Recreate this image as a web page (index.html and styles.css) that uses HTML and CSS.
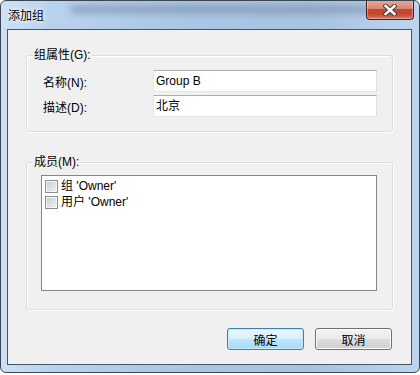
FILE: index.html
```html
<!DOCTYPE html>
<html lang="zh-CN">
<head>
<meta charset="UTF-8">
<title>添加组</title>
<link rel="stylesheet" href="styles.css">
</head>
<body>
    <div class="window">
        <div class="titlebar">
            <span class="title">添加组</span>
            <button class="close-button">
                <svg width="14" height="12" viewBox="0 0 14 12">
                    <path d="M2.5 2 L11.5 10 M11.5 2 L2.5 10" stroke="#3d3d3d" stroke-width="4.4" stroke-linecap="square"/>
                    <path d="M2.5 2 L11.5 10 M11.5 2 L2.5 10" stroke="#ffffff" stroke-width="2.4" stroke-linecap="square"/>
                </svg>
            </button>
        </div>

        <div class="client">
            <div class="group props">
                <span class="legend">组属性(G):</span>
                <div class="field-row">
                    <label class="field-label">名称(N):</label>
                    <div class="textbox">Group B</div>
                </div>
                <div class="field-row">
                    <label class="field-label">描述(D):</label>
                    <div class="textbox">北京</div>
                </div>
            </div>

            <div class="group members">
                <span class="legend">成员(M):</span>
                <div class="listbox">
                    <div class="list-item"><span class="check"></span>组 'Owner'</div>
                    <div class="list-item"><span class="check"></span>用户 'Owner'</div>
                </div>
            </div>

            <div class="button-row">
                <button class="dlg-button default-button">确定</button>
                <button class="dlg-button">取消</button>
            </div>
        </div>
    </div>
</body>
</html>
```

FILE: styles.css
```css
body {
    margin: 0;
    padding: 0;
    background-color: #ffffff;
    font-family: "Liberation Sans", "Noto Sans CJK SC", sans-serif;
    font-size: 12px;
    color: #000000;
}

.window {
    width: 420px;
    height: 373px;
    box-sizing: border-box;
    border: 1px solid #3a4654;
    border-radius: 6px;
    background: linear-gradient(to right, #cfe1f4 0%, #b9d2ec 12%, #aac6e4 45%, #a8c3e0 75%, #bdd5ee 100%);
    overflow: hidden;
}

.titlebar {
    height: 28px;
    display: flex;
    align-items: flex-start;
    position: relative;
}

.titlebar::before {
    content: "";
    position: absolute;
    left: 70px;
    right: 50px;
    top: 4px;
    height: 9px;
    background: rgba(104, 124, 150, 0.45);
    filter: blur(3px);
}

.title {
    position: relative;
    margin: 7px 0 0 7px;
    line-height: 16px;
    font-size: 12px;
    text-shadow: 0 0 6px #ffffff, 0 0 3px #ffffff;
}

.close-button {
    position: relative;
    margin: -1px 5px 0 auto;
    width: 48px;
    height: 20px;
    padding: 0;
    border: 1px solid #4a1d14;
    border-top: none;
    border-radius: 0 0 4px 4px;
    background: linear-gradient(to bottom, #e8ab9e 0%, #d88573 45%, #c4462c 50%, #c24a30 75%, #d97a5f 100%);
    box-shadow: inset 0 0 0 1px rgba(255, 255, 255, 0.35);
    display: flex;
    align-items: center;
    justify-content: center;
}

.client {
    height: 336px;
    box-sizing: border-box;
    margin: 0 7px 0 6px;
    border: 1px solid #46566a;
    background-color: #f0f0f0;
    padding: 25px 18px 14px 18px;
}

.group {
    position: relative;
    border: 1px solid #d5dfe5;
    border-radius: 3px;
    box-shadow: inset 1px 1px 0 #ffffff, 1px 1px 0 #ffffff;
}

.legend {
    position: absolute;
    left: 6px;
    top: -8px;
    padding: 0 1px;
    line-height: 14px;
    background-color: #f0f0f0;
}

.props {
    padding: 14px 15px 14px 16px;
    display: flex;
    flex-direction: column;
    gap: 3px;
}

.field-row {
    display: grid;
    grid-template-columns: 110px 1fr;
    align-items: center;
}

.textbox {
    height: 22px;
    box-sizing: border-box;
    border: 1px solid;
    border-color: #abadb3 #dbdfe6 #e3e9ef #e2e3ea;
    background-color: #ffffff;
    padding: 0 2px;
    line-height: 20px;
}

.members {
    margin-top: 30px;
    padding: 12px 15px 18px 14px;
}

.listbox {
    height: 116px;
    box-sizing: border-box;
    border: 1px solid #828790;
    background-color: #ffffff;
    padding: 2px 3px;
}

.list-item {
    height: 16px;
    display: flex;
    align-items: center;
    gap: 3px;
    line-height: 16px;
}

.check {
    width: 13px;
    height: 13px;
    box-sizing: border-box;
    border: 1px solid #8e8f8f;
    background: linear-gradient(135deg, #c3c8ce 0%, #e6e8ea 70%, #f2f2f2 100%);
    box-shadow: inset 0 0 0 1px #f4f4f4;
}

.button-row {
    margin-top: 18px;
    padding-right: 1px;
    display: flex;
    justify-content: flex-end;
    gap: 11px;
}

.dlg-button {
    width: 77px;
    height: 22px;
    padding: 0;
    font-family: inherit;
    font-size: 12px;
    color: #000000;
    border: 1px solid #707070;
    border-radius: 3px;
    background: linear-gradient(to bottom, #f2f2f2 0%, #ebebeb 50%, #dddddd 50%, #cfcfcf 100%);
    box-shadow: inset 0 0 0 1px #fcfcfc;
}

.default-button {
    border-color: #3c7fb1;
    background: linear-gradient(to bottom, #eaf6fd 0%, #d9f0fc 50%, #bee6fd 50%, #a7d9f5 100%);
    box-shadow: inset 0 0 0 1px #c6ecfd;
}
```
